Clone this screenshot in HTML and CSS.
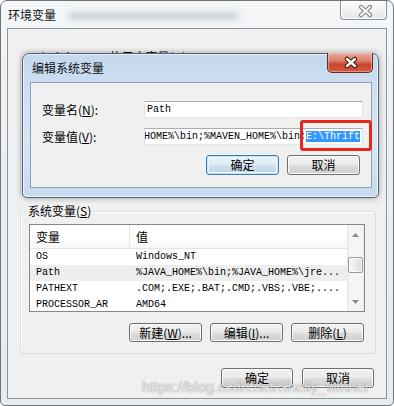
FILE: index.html
```html
<!DOCTYPE html>
<html lang="zh-CN">
<head>
<meta charset="utf-8">
<title>环境变量</title>
<link rel="stylesheet" href="styles.css">
</head>
<body>
<div class="window">
  <div class="titlebar">
    <span class="title">环境变量</span>
    <span class="glass-blur"></span>
    <button class="wclose" aria-label="关闭">
      <svg width="45" height="18" viewBox="0 0 45 18">
        <path d="M20 6 L29 14 M29 6 L20 14" stroke="#7b8185" stroke-width="4.2" stroke-linecap="round"/>
        <path d="M20 6 L29 14 M29 6 L20 14" stroke="#ffffff" stroke-width="2" stroke-linecap="round"/>
      </svg>
    </button>
  </div>
  <div class="client">
    <fieldset class="group user">
      <legend>Administrator 的用户变量(<u>U</u>)</legend>
    </fieldset>
    <fieldset class="group sys">
      <legend>系统变量(<u>S</u>)</legend>
      <div class="list">
        <div class="table">
          <div class="thead"><span class="c1">变量</span><span class="c2">值</span></div>
          <div class="row"><span class="c1">OS</span><span class="c2">Windows_NT</span></div>
          <div class="row hl"><span class="c1">Path</span><span class="c2">%JAVA_HOME%\bin;%JAVA_HOME%\jre...</span></div>
          <div class="row"><span class="c1">PATHEXT</span><span class="c2">.COM;.EXE;.BAT;.CMD;.VBS;.VBE;....</span></div>
          <div class="row"><span class="c1">PROCESSOR_AR</span><span class="c2">AMD64</span></div>
        </div>
        <div class="vscroll">
          <span class="sb-btn"><svg width="7" height="4" viewBox="0 0 7 4"><path d="M0 4 L3.5 0 L7 4 Z" fill="#8a8a8a"/></svg></span>
          <span class="thumb"></span>
          <span class="sb-btn down"><svg width="7" height="4" viewBox="0 0 7 4"><path d="M0 0 L3.5 4 L7 0 Z" fill="#8a8a8a"/></svg></span>
        </div>
      </div>
      <div class="btnrow group-btns">
        <button class="btn">新建(<u>W</u>)...</button>
        <button class="btn">编辑(<u>I</u>)...</button>
        <button class="btn">删除(<u>L</u>)</button>
      </div>
    </fieldset>
    <div class="btnrow bottom-btns">
      <button class="btn wide">确定</button>
      <button class="btn wide">取消</button>
    </div>
  </div>

  <div class="dialog">
    <div class="dtitlebar">
      <span class="dtitle">编辑系统变量</span>
      <button class="dclose" aria-label="关闭">
        <svg width="44" height="19" viewBox="0 0 44 19">
          <path d="M19 6 L27 13 M27 6 L19 13" stroke="#4a1208" stroke-width="4.6" stroke-linecap="round"/>
          <path d="M19 6 L27 13 M27 6 L19 13" stroke="#ffffff" stroke-width="2.4" stroke-linecap="round"/>
        </svg>
      </button>
    </div>
    <div class="dclient">
      <div class="field">
        <label class="flabel">变量名(<u>N</u>):</label>
        <div class="input"><span>Path</span></div>
      </div>
      <div class="field">
        <label class="flabel">变量值(<u>V</u>):</label>
        <div class="input val"><span>%JAVA_HOME%\bin;%MAVEN_HOME%\bin;<span class="sel">E:\Thrift</span></span></div>
      </div>
      <div class="btnrow dbtns">
        <button class="btn default">确定</button>
        <button class="btn">取消</button>
      </div>
    </div>
    <div class="annot"></div>
  </div>

  <div class="watermark">https://blog.csdn.net/Shelly_winner</div>
</div>
</body>
</html>
```

FILE: styles.css
```css
* { box-sizing: border-box; }

html, body {
  margin: 0;
  padding: 0;
  background: #ffffff;
}

body {
  font-family: "Noto Sans CJK SC", "Noto Sans", sans-serif;
  font-size: 12px;
  color: #000;
}

u { text-decoration: underline; text-underline-offset: 1px; }

.window {
  position: relative;
  width: 394px;
  height: 406px;
  border: 1px solid #6f767b;
  border-radius: 7px 7px 5px 5px;
  background: linear-gradient(180deg, #f4f6f8 0%, #eaeff3 40%, #e6ecf0 100%);
  display: flex;
  flex-direction: column;
  overflow: hidden;
}

/* outer title bar */
.titlebar {
  height: 27px;
  flex: none;
  display: flex;
  align-items: flex-start;
  padding: 0 6px 0 7px;
}

.title {
  line-height: 28px;
  font-size: 12px;
  color: #111;
}

.glass-blur {
  margin: 12px 0 0 12px;
  width: 170px;
  height: 6px;
  border-radius: 3px;
  background: #a9b4be;
  filter: blur(3px);
  opacity: 0.7;
}

.wclose {
  margin-left: auto;
  margin-top: -1px;
  width: 47px;
  height: 20px;
  padding: 0;
  border: 1px solid #8a9196;
  border-top: none;
  border-radius: 0 0 4px 4px;
  background: linear-gradient(180deg, #fdfdfd 0%, #f1f3f5 50%, #e3e8ec 100%);
  box-shadow: inset 0 0 0 1px rgba(255,255,255,0.8);
  display: flex;
  align-items: center;
  justify-content: center;
}

/* outer client */
.client {
  height: 371px;
  flex: none;
  margin: 0 6px;
  border: 1px solid #8c9398;
  background: #f0f0f0;
  overflow: hidden;
}

fieldset.group {
  margin: 0 0 0 12px;
  width: 356px;
  min-width: 0;
  border: 1px solid #d5dfe5;
  border-radius: 3px;
  box-shadow: inset 1px 1px 0 #fff;
}

fieldset.group legend {
  padding: 0 2px;
  line-height: 14px;
  font-size: 12px;
}

fieldset.user {
  margin-top: 21px;
  height: 146px;
  padding: 0;
}

fieldset.user legend { margin-left: 7px; }

fieldset.sys {
  margin-top: 8px;
  height: 150px;
  padding: 6px 10px 0 8px;
}

fieldset.sys legend { margin-left: -3px; }

/* list view */
.list {
  display: flex;
  width: 336px;
  height: 88px;
  border: 1px solid #828790;
  background: #ffffff;
}

.table {
  flex: 1;
  overflow: hidden;
}

.thead {
  display: flex;
  height: 24px;
  border-bottom: 1px solid #e5e5e5;
  background: linear-gradient(180deg, #ffffff 0%, #ffffff 55%, #f6f7f9 100%);
  line-height: 23px;
  font-size: 12px;
}

.thead .c1 { border-right: 1px solid #e3e6ea; }

.c1 {
  width: 100px;
  flex: none;
  padding-left: 6px;
  white-space: nowrap;
  overflow: hidden;
}

.c2 {
  padding-left: 6px;
  white-space: nowrap;
  overflow: hidden;
}

.row {
  display: flex;
  height: 16px;
  line-height: 16px;
  font-family: "Liberation Mono", monospace;
  font-size: 10px;
  color: #000;
}

.row.hl { background: #eeeeee; }

.vscroll {
  width: 17px;
  flex: none;
  display: flex;
  flex-direction: column;
  align-items: center;
  background: linear-gradient(90deg, #e9e9e9 0%, #f5f5f5 20%, #f5f5f5 80%, #ececec 100%);
}

.sb-btn {
  height: 18px;
  width: 17px;
  display: flex;
  align-items: center;
  justify-content: center;
  padding-top: 2px;
}

.sb-btn.down {
  margin-top: auto;
  padding-top: 0;
  padding-bottom: 1px;
}

.thumb {
  margin-top: 14px;
  width: 15px;
  height: 16px;
  border: 1px solid #9a9a9a;
  border-radius: 2px;
  background: linear-gradient(90deg, #f6f6f6 0%, #ececec 50%, #dcdcdc 100%);
  box-shadow: inset 0 0 0 1px #fbfbfb;
}

/* buttons */
.btnrow {
  display: flex;
  justify-content: flex-end;
}

.group-btns {
  margin-top: 11px;
  gap: 8px;
  padding-right: 1px;
}

.bottom-btns {
  margin-top: 14px;
  gap: 9px;
  padding-right: 12px;
}

.btn {
  width: 73px;
  height: 19px;
  padding: 0;
  border: 1px solid #707070;
  border-radius: 3px;
  background: linear-gradient(180deg, #f2f2f2 0%, #ebebeb 48%, #dddddd 52%, #cfcfcf 100%);
  box-shadow: inset 0 0 0 1px #fbfbfb;
  font-family: "Noto Sans CJK SC", "Noto Sans", sans-serif;
  font-size: 12px;
  line-height: 16px;
  color: #000;
}

.btn.wide { width: 72px; height: 20px; }

.btn.default {
  border-color: #3c7fb1;
  background: linear-gradient(180deg, #eaf3f9 0%, #dfecf5 48%, #cfe1ee 52%, #bdd5e6 100%);
  box-shadow: inset 0 0 0 1px #c6e4f8, inset 0 0 0 2px #eef7fd;
}

/* edit dialog */
.dialog {
  position: absolute;
  left: 21px;
  top: 52px;
  width: 357px;
  height: 145px;
  border: 1px solid #4f657c;
  border-radius: 7px 7px 5px 5px;
  background: linear-gradient(180deg, #c3d8ee 0%, #cfe0f2 30%, #d7e6f5 60%, #c8dbef 100%);
  box-shadow: 0 0 6px rgba(0,0,0,0.35), inset 0 0 0 1px rgba(255,255,255,0.6);
  display: flex;
  flex-direction: column;
}

.dtitlebar {
  height: 28px;
  flex: none;
  display: flex;
  align-items: flex-start;
  padding: 0 5px 0 9px;
}

.dtitle {
  line-height: 28px;
  font-size: 12px;
  color: #111;
}

.dclose {
  margin-left: auto;
  margin-top: -1px;
  width: 46px;
  height: 20px;
  padding: 0;
  border: 1px solid #6b2a20;
  border-top: none;
  border-radius: 0 0 5px 5px;
  background: linear-gradient(180deg, #e9ab9c 0%, #dc7f6b 40%, #c9452d 60%, #cf5a3f 100%);
  box-shadow: inset 0 0 0 1px rgba(255,220,210,0.45);
  display: flex;
  align-items: center;
  justify-content: center;
}

.dclient {
  height: 106px;
  flex: none;
  margin: 0 6px 0 7px;
  border: 1px solid #8ea3ba;
  background: #f0f0f0;
  padding: 18px 8px 0 11px;
}

.field {
  display: flex;
  height: 17px;
  margin-bottom: 10px;
}

.flabel {
  width: 102px;
  flex: none;
  line-height: 17px;
  font-size: 12px;
}

.input {
  flex: 1;
  min-width: 0;
  height: 17px;
  border: 1px solid #abadb3;
  border-color: #abadb3 #dbdfe6 #e3e9ef #e2e3ea;
  background: #ffffff;
  font-family: "Liberation Mono", monospace;
  font-size: 10px;
  line-height: 15px;
  padding-left: 2px;
  display: flex;
  white-space: nowrap;
  overflow: hidden;
}

.input.val {
  justify-content: flex-end;
  padding: 0 2px 0 0;
}

.sel {
  background: #3399ff;
  color: #ffffff;
  padding: 0;
}

.dbtns {
  margin-top: 2px;
  gap: 8px;
  padding-right: 3px;
}

.dbtns .btn { height: 20px; }

.annot {
  position: absolute;
  left: 277px;
  top: 66px;
  width: 72px;
  height: 31px;
  border: 3px solid #e8261c;
  border-radius: 3px;
}

.watermark {
  position: absolute;
  left: 141px;
  top: 378px;
  font-family: "Liberation Sans", Arial, sans-serif;
  font-size: 14.5px;
  letter-spacing: 0.1px;
  color: rgba(255,255,255,0.75);
  text-shadow: 0 0 1px rgba(0,0,0,0.35), 0 0 2px rgba(0,0,0,0.2);
  white-space: nowrap;
}
```
